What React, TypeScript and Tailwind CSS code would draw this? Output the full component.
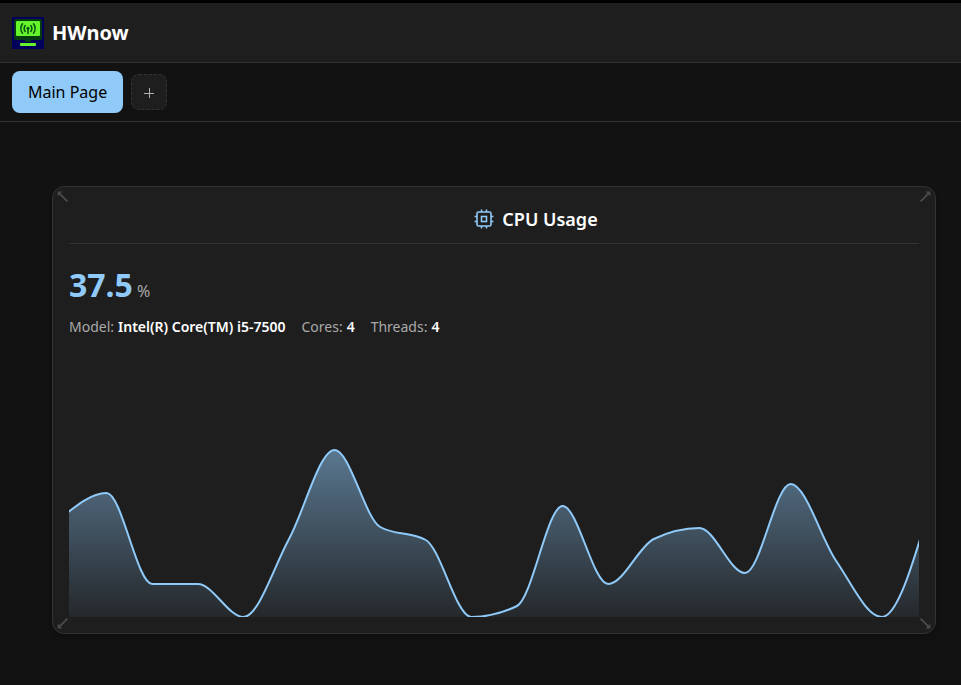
import React from 'react';

const CHART_HEIGHT = 180;

// CPU load history, as heights above the chart's baseline
const samples = [99, 124, 33, 33, 0, 78, 167, 90, 77, 0, 11, 111, 33, 78, 89, 44, 133, 56, 0, 102];

const points = samples.map((value, i) => ({ x: -8 + i * 45.6, y: CHART_HEIGHT - value }));

// Monotone cubic interpolation: no overshoot between two samples
function monotonePath(pts: { x: number; y: number }[]) {
  const slopes = pts.slice(1).map((p, i) => (p.y - pts[i].y) / (p.x - pts[i].x));
  const tangents = pts.map((_, i) => {
    if (i === 0 || i === pts.length - 1) return 0;
    const a = slopes[i - 1];
    const b = slopes[i];
    return (Math.sign(a) + Math.sign(b)) * Math.min(Math.abs(a), Math.abs(b), Math.abs(a + b) / 4);
  });
  const last = pts.length - 1;
  tangents[0] = (3 * slopes[0] - tangents[1]) / 2;
  tangents[last] = (3 * slopes[last - 1] - tangents[last - 1]) / 2;
  let d = `M${pts[0].x},${pts[0].y}`;
  for (let i = 1; i < pts.length; i++) {
    const third = (pts[i].x - pts[i - 1].x) / 3;
    d += `C${pts[i - 1].x + third},${pts[i - 1].y + third * tangents[i - 1]} ${pts[i].x - third},${pts[i].y - third * tangents[i]} ${pts[i].x},${pts[i].y}`;
  }
  return d;
}

function Logo() {
  return (
    <svg className="size-8" viewBox="0 0 32 32" aria-hidden="true">
      <rect width="32" height="32" fill="#00005a" />
      <rect x="2" y="2" width="28" height="21" rx="2" fill="#053b10" />
      <rect x="4" y="4" width="24" height="15" rx="1" fill="#66f52a" />
      <path d="M13 22h6v3h-6z" fill="#053b10" />
      <rect x="8" y="26" width="16" height="3" rx="1" fill="#66f52a" />
      <g fill="none" stroke="#075014" strokeWidth="1.5" strokeLinecap="round">
        <path d="M10.5 6.8q-3.4 4.7 0 9.4M21.5 6.8q3.4 4.7 0 9.4M13.2 8.5q-2.2 3 0 6M18.8 8.5q2.2 3 0 6M16 12v4.5" />
      </g>
      <circle cx="16" cy="11.3" r="1.5" fill="#075014" />
    </svg>
  );
}

function CpuIcon() {
  return (
    <svg className="size-5" viewBox="0 0 20 20" fill="none" stroke="#90caf9" strokeWidth="1.6" strokeLinejoin="round" aria-hidden="true">
      <rect x="3" y="3" width="14" height="14" rx="1.6" />
      <rect x="7.5" y="7.5" width="5" height="5" strokeLinejoin="miter" />
      <path d="M7.5 .6v2.4M12.5 .6v2.4M7.5 17v2.4M12.5 17v2.4M17 7.5h2.4M17 12.5h2.4M.6 7.5h2.4M.6 12.5h2.4" />
    </svg>
  );
}

function ResizeHandle({ className }: { className: string }) {
  return (
    <svg className={`absolute size-3 ${className}`} viewBox="0 0 12 12" fill="none" stroke="#4a4a4a" strokeWidth="1.8" aria-hidden="true">
      <path d="M10.4 10.4L2 2" />
      <path d="M.6 .6H5.4L.6 5.4Z" fill="#4a4a4a" stroke="none" />
    </svg>
  );
}

function Detail({ label, value }: { label: string; value: string }) {
  return (
    <div className="flex gap-1">
      <dt className="text-[#aaaaaa]">{label}:</dt>
      <dd className="font-semibold text-white">{value}</dd>
    </div>
  );
}

function UsageChart() {
  const line = monotonePath(points);
  return (
    <svg className="mt-[100px] block h-[180px] w-full" viewBox="0 0 850 180" preserveAspectRatio="none" role="img" aria-label="CPU usage history">
      <defs>
        <linearGradient id="usage" gradientUnits="userSpaceOnUse" x1="0" y1="13" x2="0" y2={CHART_HEIGHT}>
          <stop offset="0" stopColor="#90caf9" stopOpacity="0.52" />
          <stop offset="1" stopColor="#90caf9" stopOpacity="0.06" />
        </linearGradient>
      </defs>
      <path d={`${line}V${CHART_HEIGHT}H${points[0].x}Z`} fill="url(#usage)" />
      <path d={line} fill="none" stroke="#90caf9" strokeWidth="2" vectorEffect="non-scaling-stroke" />
    </svg>
  );
}

export default function App() {
  return (
    <div className="min-h-screen border-t-3 border-black bg-[#121212] font-['Noto_Sans',sans-serif] text-white">
      <header className="flex h-[60px] items-center gap-2 border-b border-[#333333] bg-[#1e1e1e] px-3">
        <Logo />
        <h1 className="text-xl font-bold">HWnow</h1>
      </header>
      <nav className="flex items-center gap-2 border-b border-[#333333] px-3 py-2">
        <button type="button" className="h-[42px] rounded-lg bg-[#90caf9] px-4 text-base text-black">
          Main Page
        </button>
        <button type="button" aria-label="Add page" className="flex size-9 items-center justify-center rounded-lg border border-dashed border-[#333333] bg-[#1e1e1e] text-[#b0b0b0]">
          <svg className="size-3" viewBox="0 0 12 12" stroke="currentColor" aria-hidden="true">
            <path d="M1 7.5h10M6.5 2v10" />
          </svg>
        </button>
      </nav>
      <main className="pt-16 pr-[25px] pb-12 pl-[52px]">
        <section className="relative rounded-xl border border-[#333333] bg-[#1e1e1e] p-4 shadow-md">
          <ResizeHandle className="top-1 left-1" />
          <ResizeHandle className="top-1 right-1 rotate-90" />
          <ResizeHandle className="bottom-1 left-1 -rotate-90" />
          <ResizeHandle className="right-1 bottom-1 rotate-180" />
          <div className="flex h-[41px] items-start justify-center border-b border-[#333333] pl-[84px]">
            <div className="flex h-8 items-center gap-2">
              <CpuIcon />
              <h2 className="text-lg font-semibold">CPU Usage</h2>
            </div>
          </div>
          <p className="mt-5 flex items-baseline gap-1 leading-[42px]">
            <span className="text-[32px] font-bold text-[#90caf9]">37.5</span>
            <span className="text-base text-[#aaaaaa]">%</span>
          </p>
          <dl className="mt-[11px] flex gap-4 text-sm">
            <Detail label="Model" value="Intel(R) Core(TM) i5-7500" />
            <Detail label="Cores" value="4" />
            <Detail label="Threads" value="4" />
          </dl>
          <UsageChart />
        </section>
      </main>
    </div>
  );
}
